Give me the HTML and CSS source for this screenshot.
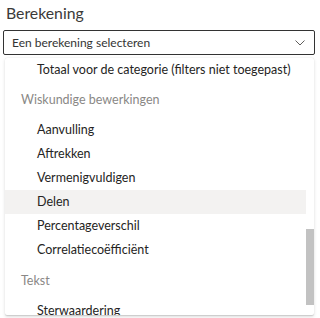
FILE: index.html
```html
<!DOCTYPE html>
<html lang="nl">
<head>
<meta charset="utf-8">
<link rel="stylesheet" href="styles.css">
</head>
<body>
<div class="field">
  <div class="label">Berekening</div>
  <div class="select">
    <span class="select-text">Een berekening selecteren</span>
    <svg class="chevron" width="10" height="6" viewBox="0 0 10 6"><path d="M0.5 0.5 L5 5 L9.5 0.5" fill="none" stroke="#605e5c" stroke-width="1"/></svg>
  </div>
  <div class="panel">
    <div class="list">
      <div class="item">Totaal voor de categorie (filters niet toegepast)</div>
      <div class="header">Wiskundige bewerkingen</div>
      <div class="item">Aanvulling</div>
      <div class="item">Aftrekken</div>
      <div class="item">Vermenigvuldigen</div>
      <div class="item hover">Delen</div>
      <div class="item">Percentageverschil</div>
      <div class="item">Correlatiecoëfficiënt</div>
      <div class="header group">Tekst</div>
      <div class="item">Sterwaardering</div>
    </div>
    <div class="thumb"></div>
  </div>
</div>
</body>
</html>
```
FILE: styles.css
```css
html, body {
  margin: 0;
  padding: 0;
  background: #ffffff;
  overflow: hidden;
}
body {
  font-family: Lato, "Open Sans", sans-serif;
  color: #252423;
  width: 320px;
  height: 318px;
}
.field {
  display: flex;
  flex-direction: column;
}
.label {
  font-size: 15.8px;
  line-height: 20px;
  color: #3b3a39;
  padding: 3px 0 0 6px;
  height: 27px;
  box-sizing: border-box;
}
.select {
  margin-left: 3px;
  width: 312px;
  height: 25px;
  box-sizing: border-box;
  border: 1px solid #333333;
  border-radius: 2px;
  display: flex;
  align-items: center;
  justify-content: space-between;
  padding: 0 9px 0 8px;
  margin-top: 3px;
}
.select-text {
  font-size: 12px;
  color: #333333;
}
.chevron {
  display: block;
}
.panel {
  position: relative;
  margin-left: 5px;
  margin-top: 3px;
  width: 309px;
  height: 257px;
  background: #ffffff;
  box-shadow: 0 1.6px 3.6px rgba(0,0,0,0.13), 0 0.3px 0.9px rgba(0,0,0,0.11);
  border-radius: 2px;
  overflow: hidden;
}
.list {
  display: flex;
  flex-direction: column;
  padding-right: 8px;
}
.item {
  height: 24px;
  line-height: 24px;
  font-size: 12.5px;
  padding-left: 32px;
  white-space: nowrap;
  color: #252423;
}
.item.hover {
  background: #f3f2f1;
}
.header {
  height: 36px;
  line-height: 36px;
  font-size: 12.5px;
  padding-left: 16px;
  color: #8a8886;
  white-space: nowrap;
}
.header.group {
  margin-top: 1px;
}
.thumb {
  position: absolute;
  right: 0;
  top: 171px;
  width: 8px;
  height: 76px;
  background: #c2c2c2;
}
```
